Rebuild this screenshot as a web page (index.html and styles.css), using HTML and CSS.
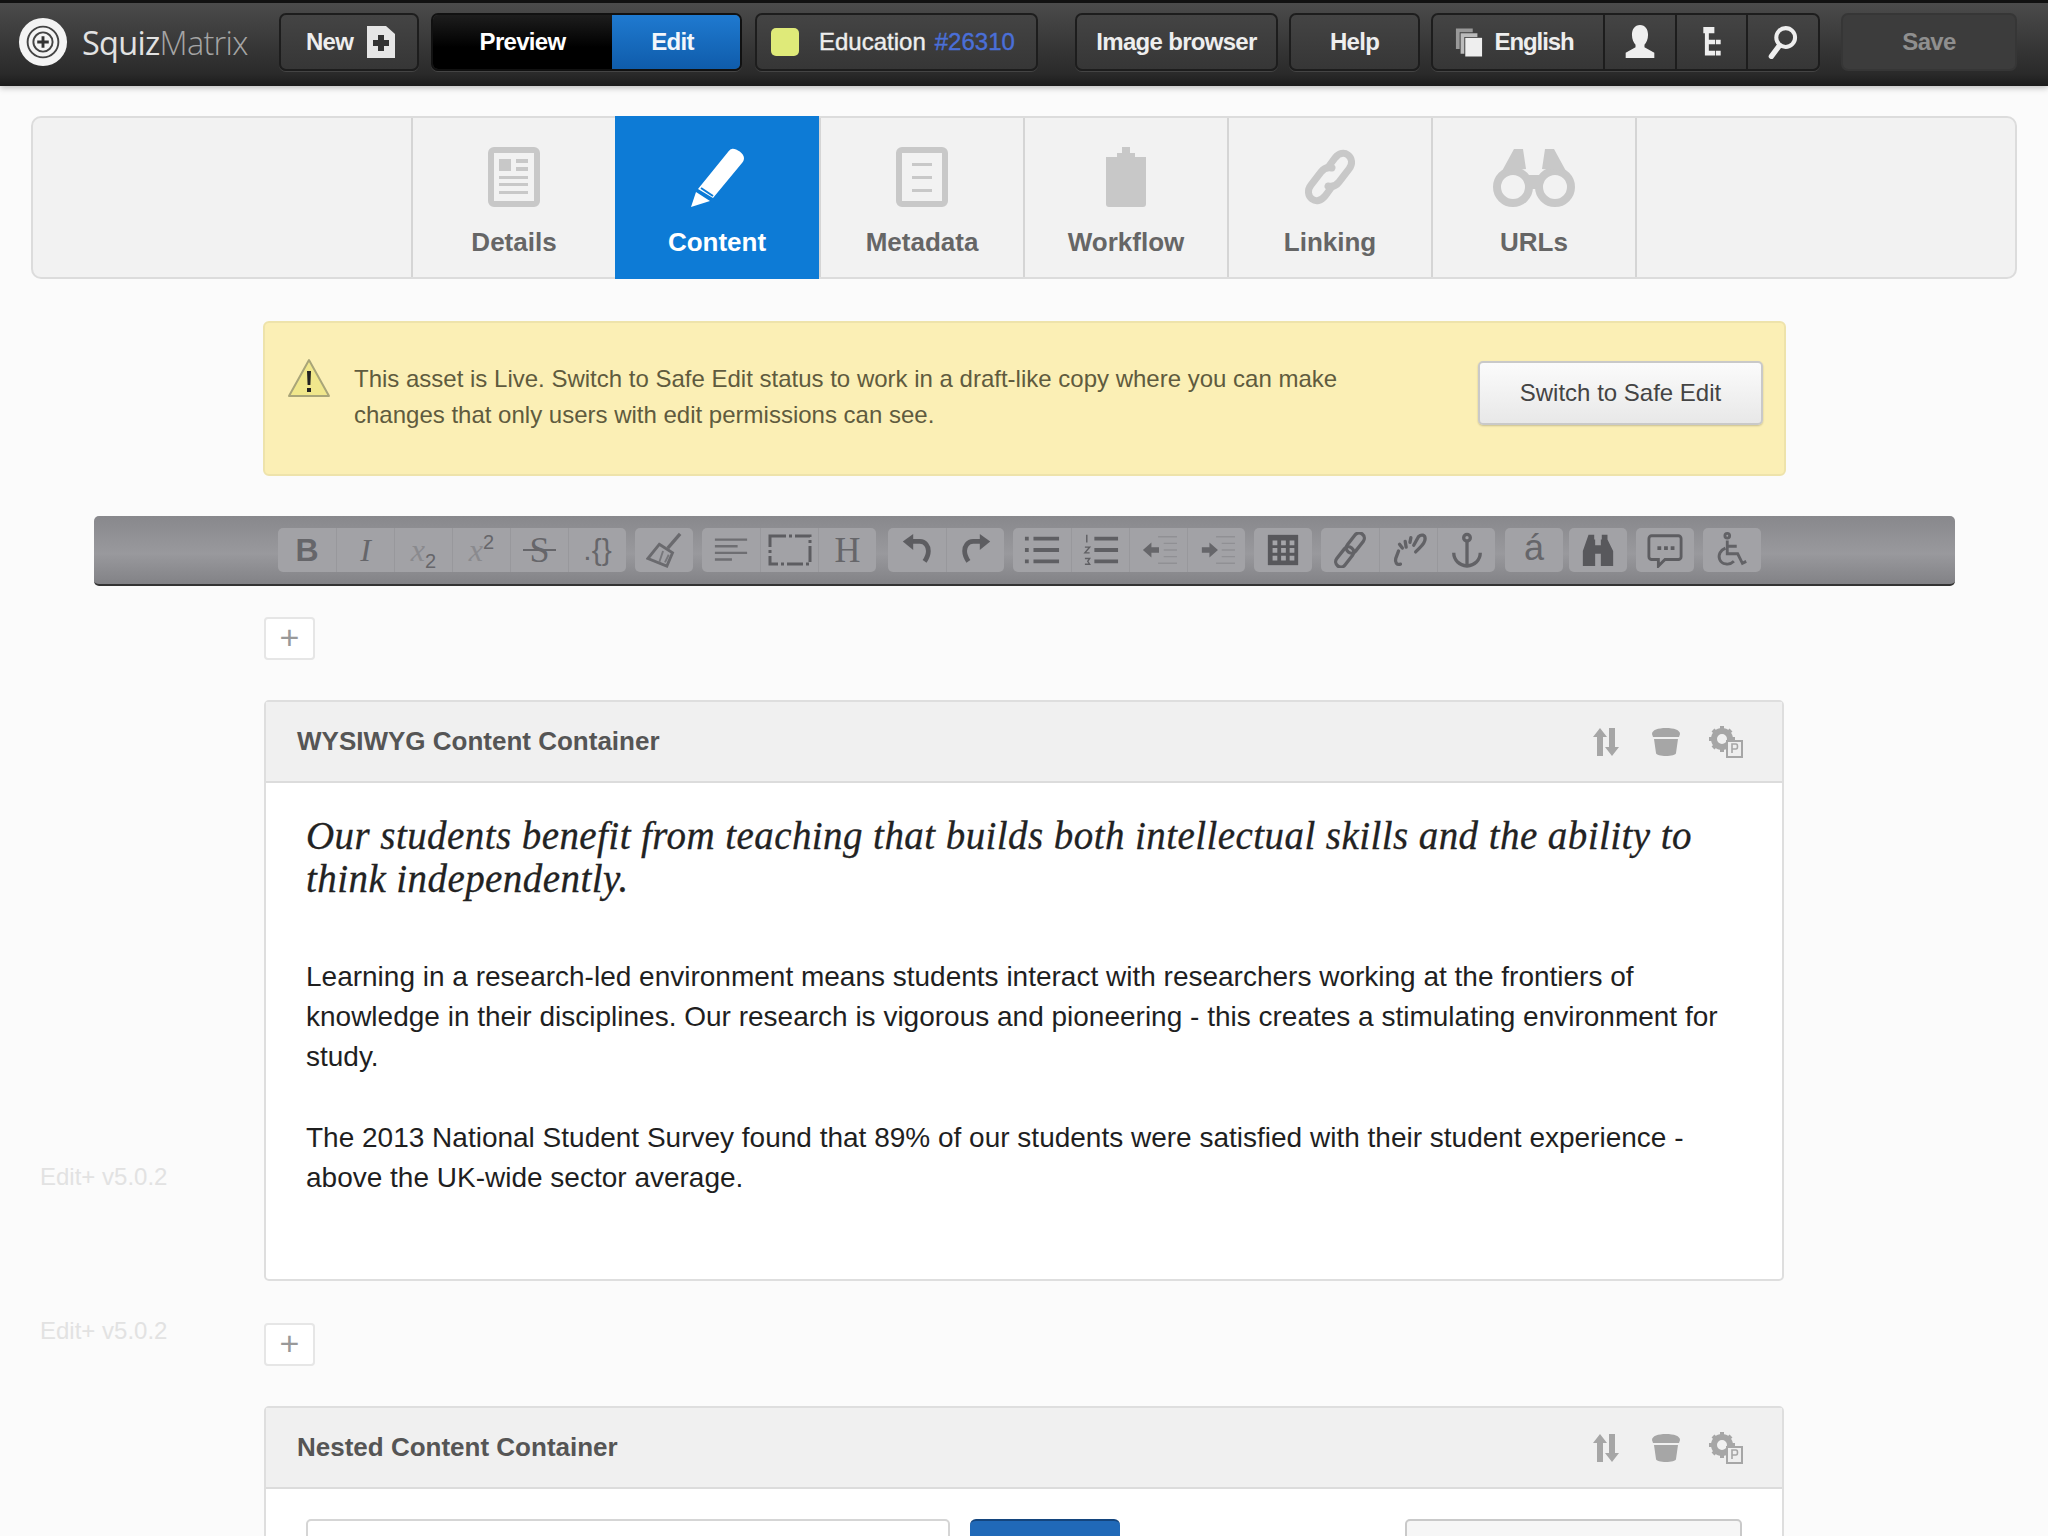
FILE: index.html
```html
<!DOCTYPE html>
<html lang="en">
<head>
    <meta charset="UTF-8">
    <title>Squiz Matrix - Edit+</title>
    <link rel="stylesheet" href="styles.css">
</head>
<body>
    <header class="topbar">
        <div class="logo">
            <svg class="logo-mark" viewBox="0 0 52 52"><circle cx="26" cy="26" r="25" fill="#f4f4f4"/><circle cx="26" cy="26" r="16" fill="none" stroke="#444" stroke-width="2"/><circle cx="26" cy="26" r="10" fill="none" stroke="#444" stroke-width="2"/><path d="M26 20v12M20 26h12" stroke="#333" stroke-width="3"/></svg>
            <span class="logo-text">Squiz<span class="logo-thin">Matrix</span></span>
        </div>
        <div class="btn btn-new">New
            <svg class="new-icon" viewBox="0 0 28 32"><path d="M0 0h19l9 8v24H0z" fill="#e6e6e6"/><path d="M11 9h6v5h5v6h-5v5h-6v-5H6v-6h5z" fill="#333"/></svg>
        </div>
        <div class="btn-group mode">
            <div class="mode-item preview">Preview</div>
            <div class="mode-item edit">Edit</div>
        </div>
        <div class="btn asset">
            <span class="status"></span>
            <span>Education</span>
            <span class="asset-id">#26310</span>
        </div>
        <div class="btn btn-image">Image browser</div>
        <div class="btn btn-help">Help</div>
        <div class="btn-group tools">
            <div class="tool lang">
                <svg class="lang-icon" viewBox="0 0 30 32"><path d="M1 1h18v4H5v18H1z" fill="#999"/><path d="M6 6h18v4H10v18H6z" fill="#bbb"/><path d="M11 11h18v20H11z" fill="#eee"/></svg>
                English
            </div>
            <div class="tool">
                <svg class="tool-icon" viewBox="0 0 34 38"><path d="M17 0c6 0 9 5 9 11 0 5-2 9-4 11v3l11 6v6H1v-6l11-6v-3c-2-2-4-6-4-11C8 5 11 0 17 0z" fill="#eee"/></svg>
            </div>
            <div class="tool">
                <svg class="tool-icon tool-icon-tree" viewBox="0 0 24 38"><path d="M1 0h14v8H8v8h8v6H8v8h8v6H3V8H1z" fill="#eee"/><path d="M17 16h6v6h-6zM17 30h6v6h-6z" fill="#eee"/></svg>
            </div>
            <div class="tool">
                <svg class="tool-icon" viewBox="0 0 32 38"><circle cx="19" cy="14" r="10.5" fill="none" stroke="#eee" stroke-width="4.5"/><path d="M12 23L3 35" stroke="#eee" stroke-width="6" stroke-linecap="round"/></svg>
            </div>
        </div>
        <div class="btn btn-save">Save</div>
    </header>

    <nav class="tabs">
        <div class="tab-spacer"></div>
        <div class="tab">
            <svg class="tab-icon" viewBox="0 0 60 60"><rect x="7" y="3" width="46" height="54" rx="3" fill="none" stroke="#c8c8c8" stroke-width="6"/><path d="M15 12h12v12H15zM32 12h12v4H32zM32 20h12v4H32zM15 29h29v3H15zM15 36h29v3H15zM15 44h29v3H15z" fill="#c8c8c8"/></svg>
            <span>Details</span>
        </div>
        <div class="tab active">
            <svg class="tab-icon" viewBox="0 0 60 60"><path d="M45 2c3-1 12 4 12 9 0 2-1 4-2 5L26 51 11 42 41 5c1-1 2-3 4-3z" fill="#fff"/><path d="M9 45l14 9L4 60z" fill="#fff"/><path d="M14 41l12 8" stroke="#0d7bd6" stroke-width="2"/></svg>
            <span>Content</span>
        </div>
        <div class="tab">
            <svg class="tab-icon" viewBox="0 0 60 60"><rect x="7" y="3" width="46" height="54" rx="3" fill="none" stroke="#c8c8c8" stroke-width="6"/><path d="M20 16h20v3H20zM20 29h20v3H20zM20 42h20v3H20z" fill="#c8c8c8"/></svg>
            <span>Metadata</span>
        </div>
        <div class="tab">
            <svg class="tab-icon" viewBox="0 0 60 60"><path d="M26 0h8v6h5v4h11v47a3 3 0 0 1-3 3H13a3 3 0 0 1-3-3V10h11V6h5z" fill="#c8c8c8"/></svg>
            <span>Workflow</span>
        </div>
        <div class="tab">
            <svg class="tab-icon" viewBox="0 0 60 60"><g fill="none" stroke="#c8c8c8" stroke-width="7" stroke-linecap="round"><path d="M29 19l6-8c4-5 9-6 13-3s5 9 1 14l-10 13c-3 4-7 5-11 4"/><path d="M31 41l-6 8c-4 5-9 6-13 3s-5-9-1-14l10-13c3-4 7-5 11-4"/></g></svg>
            <span>Linking</span>
        </div>
        <div class="tab">
            <svg class="tab-icon tab-icon-wide" viewBox="0 0 84 60"><g fill="none" stroke="#c8c8c8" stroke-width="8"><circle cx="21" cy="40" r="16"/><circle cx="63" cy="40" r="16"/></g><path d="M10 24L22 2h9l3 20zM74 24L62 2h-9l-3 20zM34 28h16v14H34z" fill="#c8c8c8"/></svg>
            <span>URLs</span>
        </div>
        <div class="tab-spacer tab-spacer-end"></div>
    </nav>

    <main class="page">
        <div class="notice">
            <svg class="notice-icon" viewBox="0 0 44 40"><path d="M22 2L42 38H2z" fill="#f0e78c" stroke="#a9a578" stroke-width="2" stroke-linejoin="round"/><path d="M20 13h4l-.6 14h-2.8zM20 30h4v4h-4z" fill="#222"/></svg>
            <p class="notice-text">This asset is Live. Switch to Safe Edit status to work in a draft-like copy where you can make<br>changes that only users with edit permissions can see.</p>
            <div class="safe-btn">Switch to Safe Edit</div>
        </div>

        <div class="editor-bar">
            <div class="ed-group">
                <div class="ed-btn ed-bold">B</div>
                <div class="ed-btn ed-serif"><i>I</i></div>
                <div class="ed-btn ed-serif"><span><i class="faint">x</i><sub>2</sub></span></div>
                <div class="ed-btn ed-serif"><span><i class="faint">x</i><sup>2</sup></span></div>
                <div class="ed-btn ed-serif ed-strike">S</div>
                <div class="ed-btn ed-code">.{}</div>
            </div>
            <div class="ed-group">
                <div class="ed-btn"><svg class="ed-icon" viewBox="0 0 38 38"><path d="M36 2L23 17" stroke="#6a6a6e" stroke-width="3.5"/><path d="M14 13l14 9-6 14-20-8z" fill="none" stroke="#6a6a6e" stroke-width="3"/><path d="M18 20l-4 12M24 24l-4 8" stroke="#77777b" stroke-width="2"/></svg></div>
            </div>
            <div class="ed-group">
                <div class="ed-btn"><svg class="ed-icon" viewBox="0 0 38 38"><path d="M2 8h34M2 15h24M2 22h34M2 29h18" stroke="#6e6e72" stroke-width="2.5"/></svg></div>
                <div class="ed-btn"><svg class="ed-icon ed-icon-wide" viewBox="0 0 44 32"><path d="M2 2h40v28H2z" fill="none" stroke="#5d5d61" stroke-width="3" stroke-dasharray="16 3 3 3"/></svg></div>
                <div class="ed-btn ed-serif ed-h">H</div>
            </div>
            <div class="ed-group ed-group-undo">
                <div class="ed-btn"><svg class="ed-icon" viewBox="0 0 38 38"><path d="M12 10h10c6 0 9 5 9 10 0 4-2 8-4 11" fill="none" stroke="#5d5d61" stroke-width="5"/><path d="M15 2L4 10l11 9z" fill="#5d5d61"/></svg></div>
                <div class="ed-btn"><svg class="ed-icon" viewBox="0 0 38 38"><path d="M26 10H16c-6 0-9 5-9 10 0 4 2 8 4 11" fill="none" stroke="#5d5d61" stroke-width="5"/><path d="M23 2l11 8-11 9z" fill="#5d5d61"/></svg></div>
            </div>
            <div class="ed-group">
                <div class="ed-btn"><svg class="ed-icon" viewBox="0 0 38 38"><path d="M10 7h27M10 19h27M10 31h27" stroke="#5f5f63" stroke-width="4"/><path d="M1 5h4v4H1zM1 17h4v4H1zM1 29h4v4H1z" fill="#5f5f63"/></svg></div>
                <div class="ed-btn"><svg class="ed-icon" viewBox="0 0 38 38"><path d="M12 7h25M12 19h25M12 31h25" stroke="#5f5f63" stroke-width="4"/><path d="M4 3v8M2 16h5l-5 6h5M2 28h5l-2 3 2 3H2" fill="none" stroke="#5f5f63" stroke-width="1.5"/></svg></div>
                <div class="ed-btn"><svg class="ed-icon" viewBox="0 0 38 38"><path d="M18 5h20M24 12h14M24 19h14M24 26h14M18 33h20" stroke="#909094" stroke-width="1.5"/><path d="M2 19l9-8v5h8v6h-8v5z" fill="#66666a"/></svg></div>
                <div class="ed-btn"><svg class="ed-icon" viewBox="0 0 38 38"><path d="M18 5h20M24 12h14M24 19h14M24 26h14M18 33h20" stroke="#909094" stroke-width="1.5"/><path d="M20 19l-9-8v5H3v6h8v5z" fill="#66666a"/></svg></div>
            </div>
            <div class="ed-group">
                <div class="ed-btn"><svg class="ed-icon" viewBox="0 0 38 38"><path d="M3 3h32v32H3z" fill="#58585c"/><path d="M8 9h5v5H8zM17 9h5v5h-5zM26 9h5v5h-5zM8 17h5v5H8zM17 17h5v5h-5zM26 17h5v5h-5zM8 25h5v5H8zM17 25h5v5h-5zM26 25h5v5h-5z" fill="#a5a5a9"/></svg></div>
            </div>
            <div class="ed-group">
                <div class="ed-btn"><svg class="ed-icon" viewBox="0 0 38 38"><g fill="none" stroke="#626266" stroke-width="3.5"><rect x="19" y="0" width="11" height="24" rx="5.5" transform="rotate(38 25 12)"/><rect x="8" y="14" width="11" height="24" rx="5.5" transform="rotate(38 13 26)"/></g></svg></div>
                <div class="ed-btn"><svg class="ed-icon" viewBox="0 0 38 38"><g fill="none" stroke="#626266" stroke-width="3.5" stroke-linecap="round"><path d="M8 20l-3 8c-1 4 1 7 5 6M24 14l5-9c3-3 7-2 7 2 0 3-3 7-6 10l-4 4"/><path d="M15 10l1 6M21 6l-1 5M9 13l3 4"/></g></svg></div>
                <div class="ed-btn"><svg class="ed-icon" viewBox="0 0 38 38"><g fill="none" stroke="#626266" stroke-width="3.5"><circle cx="19" cy="6" r="3.5"/><path d="M19 10v26M5 22c0 8 6 13 14 14 8-1 14-6 14-14"/></g></svg></div>
            </div>
            <div class="ed-group ed-group-accent">
                <div class="ed-btn ed-accent">á</div>
            </div>
            <div class="ed-group ed-group-find">
                <div class="ed-btn"><svg class="ed-icon" viewBox="0 0 38 38"><path d="M9 3h6v5h1v28H3V20zM23 3h6v5l6 12v16H22V8h1zM16 14h6v9h-6z" fill="#58585c"/></svg></div>
            </div>
            <div class="ed-group">
                <div class="ed-btn"><svg class="ed-icon" viewBox="0 0 38 38"><path d="M5 4h28a3 3 0 0 1 3 3v19a3 3 0 0 1-3 3H19l-7 7v-7H5a3 3 0 0 1-3-3V7a3 3 0 0 1 3-3z" fill="none" stroke="#5d5d61" stroke-width="3"/><path d="M11 15h4v4h-4zM18 15h4v4h-4zM25 15h4v4h-4z" fill="#5d5d61"/></svg></div>
            </div>
            <div class="ed-group">
                <div class="ed-btn"><svg class="ed-icon" viewBox="0 0 38 38"><g fill="none" stroke="#626266" stroke-width="3"><circle cx="14" cy="4" r="2.5"/><path d="M14 9v14h11l5 10 4-2M14 15h10M12 17c-5 2-8 7-6 12 2 5 10 7 15 2"/></g></svg></div>
            </div>
        </div>

        <div class="column">
            <div class="add-row"><div class="add-btn">+</div></div>

            <section class="container">
                <div class="container-head">
                    <h2>WYSIWYG Content Container</h2>
                    <div class="head-icons">
                        <svg class="head-icon" viewBox="0 0 30 30"><path d="M9 1l7 9h-4v19H6V10H2zM21 29l-7-9h4V1h6v19h4z" fill="#a6a6a6"/></svg>
                        <svg class="head-icon" viewBox="0 0 30 30"><path d="M15 1c8 0 14 2 14 6l-1 3H2L1 7c0-4 6-6 14-6z" fill="#a6a6a6"/><path d="M3 12h24l-2 14c0 2-5 3-10 3S5 28 5 26z" fill="#a6a6a6"/></svg>
                        <svg class="head-icon head-icon-gear" viewBox="0 0 34 32"><circle cx="13" cy="13" r="8" fill="none" stroke="#a6a6a6" stroke-width="6"/><path d="M13 0v5M13 21v5M0 13h5M21 13h5M4 4l4 4M18 18l4 4M4 22l4-4M18 8l4-4" stroke="#a6a6a6" stroke-width="4"/><path d="M18 15h15v16H18z" fill="#eee" stroke="#a6a6a6" stroke-width="2"/><path d="M23 27v-9h4c2 0 2 5 0 5h-4" fill="none" stroke="#a6a6a6" stroke-width="1.6"/></svg>
                    </div>
                </div>
                <div class="container-body">
                    <h3 class="lead">Our students benefit from teaching that builds both intellectual skills and the ability to think independently.</h3>
                    <p>Learning in a research-led environment means students interact with researchers working at the frontiers of knowledge in their disciplines. Our research is vigorous and pioneering - this creates a stimulating environment for study.</p>
                    <p>The 2013 National Student Survey found that 89% of our students were satisfied with their student experience - above the UK-wide sector average.</p>
                </div>
            </section>

            <div class="add-row add-row-2"><div class="add-btn">+</div></div>

            <section class="container">
                <div class="container-head">
                    <h2>Nested Content Container</h2>
                    <div class="head-icons">
                        <svg class="head-icon" viewBox="0 0 30 30"><path d="M9 1l7 9h-4v19H6V10H2zM21 29l-7-9h4V1h6v19h4z" fill="#a6a6a6"/></svg>
                        <svg class="head-icon" viewBox="0 0 30 30"><path d="M15 1c8 0 14 2 14 6l-1 3H2L1 7c0-4 6-6 14-6z" fill="#a6a6a6"/><path d="M3 12h24l-2 14c0 2-5 3-10 3S5 28 5 26z" fill="#a6a6a6"/></svg>
                        <svg class="head-icon head-icon-gear" viewBox="0 0 34 32"><circle cx="13" cy="13" r="8" fill="none" stroke="#a6a6a6" stroke-width="6"/><path d="M13 0v5M13 21v5M0 13h5M21 13h5M4 4l4 4M18 18l4 4M4 22l4-4M18 8l4-4" stroke="#a6a6a6" stroke-width="4"/><path d="M18 15h15v16H18z" fill="#eee" stroke="#a6a6a6" stroke-width="2"/><path d="M23 27v-9h4c2 0 2 5 0 5h-4" fill="none" stroke="#a6a6a6" stroke-width="1.6"/></svg>
                    </div>
                </div>
                <div class="nested-body">
                    <div class="nested-input"></div>
                    <div class="nested-blue"></div>
                    <div class="nested-right"></div>
                </div>
            </section>
        </div>

        <span class="version version-1">Edit+ v5.0.2</span>
        <span class="version version-2">Edit+ v5.0.2</span>
    </main>
</body>
</html>
```

FILE: styles.css
```css
html, body {
    margin: 0;
    height: 1536px;
    overflow: hidden;
}
body {
    font-family: "Liberation Sans", Arial, sans-serif;
    background-color: #fbfbfb;
    color: #222;
}

/* top bar */
.topbar {
    height: 86px;
    box-sizing: border-box;
    padding: 10px 31px 0 18px;
    display: flex;
    align-items: flex-start;
    background: linear-gradient(#4b4b4b, #2a2a2a 85%, #1c1c1c);
    border-top: 3px solid #111;
    box-shadow: 0 2px 6px rgba(0, 0, 0, 0.25);
    color: #eee;
    font-size: 24px;
    font-weight: bold;
    letter-spacing: -0.7px;
}
.logo {
    width: 261px;
    height: 58px;
    display: flex;
    align-items: center;
    flex-shrink: 0;
}
.logo-mark {
    width: 50px;
    height: 50px;
    margin-right: 14px;
}
.logo-text {
    font-family: "Open Sans", sans-serif;
    font-size: 32.5px;
    font-weight: 400;
    color: #e2e2e2;
}
.logo-thin {
    font-weight: 300;
    color: #a5a5a5;
}
.btn, .btn-group {
    height: 58px;
    box-sizing: border-box;
    border: 2px solid #1d1d1d;
    border-radius: 7px;
    background: linear-gradient(#444, #363636);
    box-shadow: 0 1px 0 rgba(255, 255, 255, 0.12);
    display: flex;
    align-items: center;
    justify-content: center;
    flex-shrink: 0;
}
.btn-new {
    width: 140px;
    gap: 14px;
    margin-right: 12px;
    padding-left: 3px;
}
.new-icon {
    width: 28px;
    height: 32px;
}
.mode {
    width: 311px;
    margin-right: 13px;
    overflow: hidden;
    align-items: stretch;
    border-color: #111;
}
.mode-item {
    display: flex;
    align-items: center;
    justify-content: center;
}
.preview {
    width: 179px;
    background: linear-gradient(#1d1d1d, #000 60%);
    color: #fff;
}
.edit {
    flex: 1;
    padding-right: 7px;
    background: linear-gradient(#1f7ad0, #0f5cab);
    color: #f2f6fb;
}
.asset {
    width: 283px;
    margin-right: 37px;
    font-weight: normal;
    letter-spacing: 0;
    justify-content: flex-start;
    padding-left: 14px;
    -webkit-text-stroke: 0.4px;
}
.status {
    width: 28px;
    height: 28px;
    border-radius: 5px;
    background-color: #dfea79;
    margin-right: 20px;
}
.asset-id {
    color: #4a6fd8;
    margin-left: 9px;
}
.btn-image {
    width: 203px;
    margin-right: 11px;
}
.btn-help {
    width: 131px;
    margin-right: 11px;
}
.tools {
    width: 389px;
    margin-right: 21px;
    align-items: stretch;
    justify-content: flex-start;
}
.tool {
    width: 72px;
    display: flex;
    align-items: center;
    justify-content: center;
    border-left: 2px solid #1d1d1d;
    box-sizing: border-box;
}
.tool.lang {
    width: 171px;
    border-left: 0;
    gap: 12px;
    padding-right: 8px;
    letter-spacing: -1.1px;
}
.lang-icon {
    width: 28px;
    height: 31px;
}
.tool-icon {
    height: 34px;
    width: 32px;
}
.tool-icon-tree {
    height: 30px;
}
.btn-save {
    width: 176px;
    background: #3c3c3c;
    border-color: #363636;
    box-shadow: none;
    color: #8f8f8f;
}

/* tabs */
.tabs {
    margin: 30px 31px 0;
    height: 163px;
    box-sizing: border-box;
    display: flex;
    border: 2px solid #dcdcdc;
    border-radius: 10px;
    background-color: #f2f2f2;
}
.tab-spacer {
    width: 378px;
}
.tab-spacer-end {
    flex: 1;
    width: auto;
}
.tab {
    width: 204px;
    box-sizing: border-box;
    border-left: 2px solid #d5d5d5;
    display: flex;
    flex-direction: column;
    align-items: center;
    color: #666;
    font-size: 26px;
    font-weight: bold;
    padding-top: 29px;
}
.tab:nth-last-child(2) {
    border-right: 2px solid #d5d5d5;
    width: 206px;
}
.tab.active {
    background-color: #0d7bd6;
    color: #fff;
    border-left: 0;
    margin: -2px 0;
    padding-top: 31px;
}
.tab-icon {
    width: 60px;
    height: 60px;
    margin-bottom: 20px;
}
.tab-icon-wide {
    width: 84px;
}

/* page body */
.page {
    position: relative;
}
.notice {
    margin: 42px 0 0 263px;
    width: 1523px;
    height: 155px;
    box-sizing: border-box;
    background-color: #fbefb5;
    border: 2px solid #eee3ab;
    border-radius: 6px;
    display: flex;
    align-items: center;
    padding: 0 21px 0 22px;
}
.notice-icon {
    width: 44px;
    height: 40px;
    margin: 0 23px 42px 0;
    flex-shrink: 0;
}
.notice-text {
    flex: 1;
    margin: 0 0 4px;
    color: #5f5b3e;
    font-size: 24px;
    line-height: 36px;
}
.safe-btn {
    width: 285px;
    height: 64px;
    box-sizing: border-box;
    margin-bottom: 12px;
    border: 2px solid #c9c9c9;
    border-radius: 5px;
    background: linear-gradient(#fbfbfb, #e8e8e8);
    box-shadow: 0 1px 2px rgba(0, 0, 0, 0.2);
    color: #444;
    font-size: 24px;
    display: flex;
    align-items: center;
    justify-content: center;
}

/* editor toolbar */
.editor-bar {
    margin: 40px 0 0 94px;
    width: 1861px;
    height: 70px;
    box-sizing: border-box;
    padding: 12px 0 0 184px;
    display: flex;
    gap: 9px;
    background: linear-gradient(#88888c, #99999d 55%, #828286);
    border-bottom: 2px solid #333;
    border-radius: 5px;
}
.ed-group {
    display: flex;
    height: 44px;
    background-color: #a2a2a6;
    border-radius: 5px;
}
.ed-group-undo {
    margin-left: 3px;
}
.ed-group-accent {
    margin-left: 1px;
}
.ed-group-find {
    margin-left: -3px;
}
.ed-btn {
    width: 58px;
    display: flex;
    align-items: center;
    justify-content: center;
    border-left: 1px solid #98989c;
    box-sizing: border-box;
    color: #66666a;
    font-size: 32px;
    position: relative;
}
.ed-btn:first-child {
    border-left: 0;
}
.ed-bold {
    font-weight: bold;
}
.ed-serif {
    font-family: "Liberation Serif", serif;
}
.ed-serif sub, .ed-serif sup {
    font-family: "Liberation Sans", sans-serif;
    font-size: 20px;
    line-height: 0;
}
.faint {
    color: #8a8a8e;
}
.ed-strike {
    font-size: 36px;
}
.ed-strike::after {
    content: "";
    position: absolute;
    left: 12px;
    right: 12px;
    top: 21px;
    height: 2px;
    background-color: #66666a;
}
.ed-code {
    font-size: 30px;
}
.ed-h {
    font-size: 36px;
}
.ed-accent {
    font-size: 36px;
    padding-bottom: 4px;
}
.ed-icon {
    width: 36px;
    height: 36px;
}
.ed-icon-wide {
    width: 44px;
    height: 32px;
}

/* containers */
.column {
    margin-left: 264px;
    width: 1520px;
}
.add-row {
    padding-top: 31px;
    height: 114px;
    box-sizing: border-box;
}
.add-row-2 {
    padding-top: 42px;
    height: 125px;
}
.add-btn {
    width: 51px;
    height: 43px;
    box-sizing: border-box;
    border: 2px solid #e6e6e6;
    border-radius: 4px;
    background-color: #fff;
    color: #999;
    font-size: 34px;
    line-height: 37px;
    text-align: center;
}
.container {
    border: 2px solid #dedede;
    border-radius: 5px;
    background-color: #fff;
}
.container-head {
    height: 81px;
    box-sizing: border-box;
    padding: 0 35px 0 31px;
    background-color: #f0f0f0;
    border-bottom: 2px solid #dcdcdc;
    display: flex;
    align-items: center;
    justify-content: space-between;
}
.container-head h2 {
    margin: 0;
    color: #555;
    font-size: 26px;
}
.head-icons {
    display: flex;
    gap: 30px;
}
.head-icon {
    width: 30px;
    height: 32px;
}
.head-icon-gear {
    width: 36px;
    margin-left: -3px;
    margin-right: 3px;
}
.container-body {
    height: 496px;
    box-sizing: border-box;
    padding: 31px 40px 0;
}
.container-body p {
    margin: 0 0 41px;
    color: #1f1f1f;
    font-size: 28px;
    line-height: 40px;
}
.lead {
    margin: 0 0 57px;
    font-family: "Liberation Serif", serif;
    font-style: italic;
    font-weight: normal;
    font-size: 39px;
    letter-spacing: 0.43px;
    line-height: 43px;
    color: #222;
    -webkit-text-stroke: 0.3px;
}
.nested-body {
    display: flex;
    height: 60px;
    padding: 30px 40px 0;
    box-sizing: border-box;
    overflow: hidden;
}
.nested-input {
    width: 644px;
    height: 60px;
    box-sizing: border-box;
    border: 2px solid #d5d5d5;
    border-radius: 5px;
    margin-right: 20px;
}
.nested-blue {
    width: 150px;
    height: 60px;
    border-radius: 6px;
    background-color: #2069b8;
    border-top: 2px solid #14457d;
    margin-right: 285px;
}
.nested-right {
    width: 337px;
    height: 60px;
    box-sizing: border-box;
    border: 2px solid #c9c9c9;
    border-radius: 5px;
    background-color: #f6f6f6;
}
.version {
    position: absolute;
    left: 40px;
    color: #e2e2e2;
    font-size: 24px;
}
.version-1 {
    top: 842px;
}
.version-2 {
    top: 996px;
}
```
